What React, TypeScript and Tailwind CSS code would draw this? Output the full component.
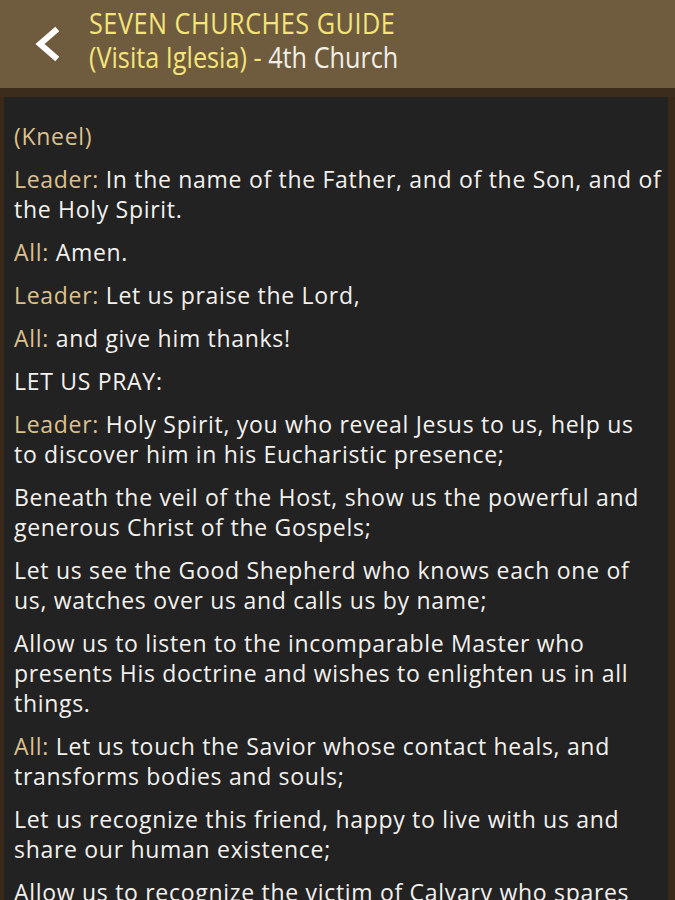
const LABEL = 'text-[#dcc08e]';

type Para = { label?: string; text: string };

const PARAS: Para[] = [
  { label: '(Kneel)', text: '' },
  { label: 'Leader:', text: 'In the name of the Father, and of the Son, and of the Holy Spirit.' },
  { label: 'All:', text: 'Amen.' },
  { label: 'Leader:', text: 'Let us praise the Lord,' },
  { label: 'All:', text: 'and give him thanks!' },
  { text: 'LET US PRAY:' },
  { label: 'Leader:', text: 'Holy Spirit, you who reveal Jesus to us, help us to discover him in his Eucharistic presence;' },
  { text: 'Beneath the veil of the Host, show us the powerful and generous Christ of the Gospels;' },
  { text: 'Let us see the Good Shepherd who knows each one of us, watches over us and calls us by name;' },
  { text: 'Allow us to listen to the incomparable Master who presents His doctrine and wishes to enlighten us in all things.' },
  { label: 'All:', text: 'Let us touch the Savior whose contact heals, and transforms bodies and souls;' },
  { text: 'Let us recognize this friend, happy to live with us and share our human existence;' },
  { text: 'Allow us to recognize the victim of Calvary who spares us from the punishment of our sins;' },
];

export default function App() {
  return (
    <div className="w-[675px] h-[900px] overflow-hidden bg-[#3a2818] font-['Open_Sans',sans-serif]">
      {/* Header */}
      <div className="h-[88px] bg-[#6f5b3d] flex items-center">
        <div className="w-[89px] flex justify-center pl-[2px]">
          <svg width="30" height="36" viewBox="0 0 30 36">
            <path d="M24 5 L9 18 L24 31" fill="none" stroke="#ffffff" strokeWidth="6" strokeLinecap="square" strokeLinejoin="miter" />
          </svg>
        </div>
        <div className="origin-left scale-x-[0.87] leading-[34px] text-[29px] whitespace-nowrap -mt-[9px]">
          <div className="text-[#f4e57a] tracking-[0.6px]">SEVEN CHURCHES GUIDE</div>
          <div>
            <span className="text-[#f4e57a]">(Visita Iglesia) -</span>
            <span className="text-[#f2efe6]"> 4th Church</span>
          </div>
        </div>
      </div>
      <div className="h-[9px] bg-[#3c2c1c]" />

      {/* Content panel */}
      <div className="ml-[4px] mr-[7px] h-full bg-[#222222] pt-[24px] pl-[10px] pr-[6px]">
        {PARAS.map((p, i) => (
          <p key={i} className="text-[23px] font-medium tracking-[0.7px] leading-[30px] text-[#f3f1ee] mb-[13px]">
            {p.label && <span className={LABEL}>{p.label}</span>}
            {p.label && p.text ? ' ' : ''}
            {p.text}
          </p>
        ))}
      </div>
    </div>
  );
}
